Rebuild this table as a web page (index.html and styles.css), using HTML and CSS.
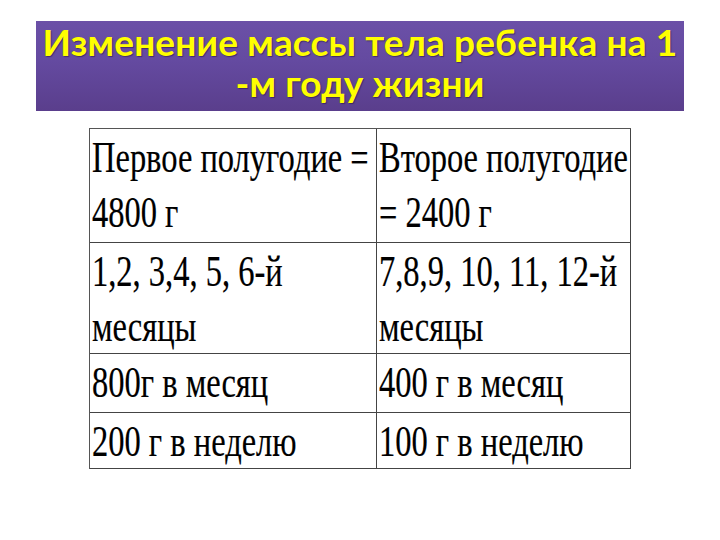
FILE: index.html
```html
<!DOCTYPE html>
<html lang="ru">
<head>
<meta charset="utf-8">
<title>Изменение массы тела ребенка</title>
<link rel="stylesheet" href="styles.css">
</head>
<body>
<div class="slide">
  <div class="title">
    <h1>Изменение массы тела ребенка на 1<br>-м году жизни</h1>
  </div>
  <div class="table">
    <div class="cell"><div class="txt">Первое полугодие =<br>4800 г</div></div>
    <div class="cell"><div class="txt">Второе полугодие<br>= 2400 г</div></div>
    <div class="cell"><div class="txt">1,2, 3,4, 5, 6-й<br>месяцы</div></div>
    <div class="cell"><div class="txt">7,8,9, 10, 11, 12-й<br>месяцы</div></div>
    <div class="cell"><div class="txt">800г в месяц</div></div>
    <div class="cell"><div class="txt">400 г в месяц</div></div>
    <div class="cell"><div class="txt">200 г в неделю</div></div>
    <div class="cell"><div class="txt">100 г в неделю</div></div>
  </div>
</div>
</body>
</html>
```
FILE: styles.css
```css
html, body {
  margin: 0;
  padding: 0;
  background: #ffffff;
}
.slide {
  width: 720px;
  height: 540px;
  padding-top: 21px;
  box-sizing: border-box;
  overflow: hidden;
}
.title {
  margin-left: 36px;
  width: 648px;
  height: 90px;
  background: linear-gradient(to bottom, #6b50a7 0%, #644aa0 45%, #5a3e8c 100%);
}
.title h1 {
  margin: 0;
  font-family: Lato, "Open Sans", sans-serif;
  font-weight: 700;
  font-size: 37px;
  line-height: 41px;
  color: #ffff00;
  text-align: center;
  letter-spacing: 0.15px;
  text-shadow: 1px 1px 1px rgba(40, 20, 60, 0.55);
}
.table {
  margin-top: 17px;
  margin-left: 89px;
  width: 541px;
  display: grid;
  grid-template-columns: 287px 254px;
  grid-template-rows: 114px 111px 59px 56px;
  border-top: 1px solid #555;
  border-left: 1px solid #555;
}
.cell {
  border-right: 1px solid #444;
  border-bottom: 1px solid #444;
  padding: 1px 0 0 2px;
  overflow: visible;
  min-width: 0;
}
.txt {
  font-family: "Liberation Serif", "Times New Roman", serif;
  font-size: 44.5px;
  line-height: 55px;
  color: #000;
  white-space: nowrap;
  transform: scaleX(0.73);
  transform-origin: left top;
  -webkit-text-stroke: 0.2px #000;
}
```
